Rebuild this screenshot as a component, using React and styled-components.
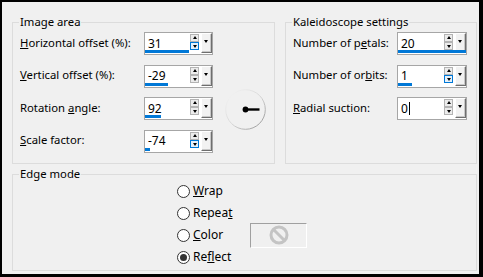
import React from 'react';
import styled, { createGlobalStyle } from 'styled-components';

const Global = createGlobalStyle`
  html, body { margin: 0; padding: 0; background: #f0f0f0; }
  body { font-family: "Noto Sans", "Open Sans", sans-serif; font-size: 11.3px; color: #000; }
  * { box-sizing: border-box; }
`;

const Frame = styled.div`
  width: 483px;
  height: 277px;
  background: #f0f0f0;
  border-style: solid;
  border-color: #000;
  border-width: 2px 4px 3px 2px;
  padding: 20px 2px 0 10px;
  display: grid;
  grid-template-columns: 263px 192px;
  grid-template-rows: 142px 97px;
  column-gap: 10px;
  row-gap: 10px;
`;

const Group = styled.section`
  position: relative;
  border: 1px solid #dcdcdc;
  grid-column: ${p => (p.$span ? '1 / -1' : 'auto')};
  padding: ${p => p.$pad};
`;

const GroupTitle = styled.span`
  position: absolute;
  top: -8px;
  left: 6px;
  padding: 0 1px;
  background: #f0f0f0;
  line-height: 14px;
  white-space: nowrap;
`;

const FieldGrid = styled.div`
  display: grid;
  grid-template-columns: ${p => p.$cols};
  grid-auto-rows: 23px;
  column-gap: 12px;
  row-gap: 9.67px;
  align-items: center;
`;

const Label = styled.span`
  grid-column: 1;
  white-space: nowrap;
  line-height: 14px;
  padding-bottom: 2px;
`;

const Spin = styled.div`
  grid-column: 2;
  position: relative;
  width: ${p => p.$w}px;
  height: 23px;
  border: 1px solid #a6a6a6;
  background: #fff;
  display: flex;
  align-items: flex-start;
`;

const Field = styled.div`
  width: 46px;
  height: 20px;
  padding-left: 3px;
  line-height: 19px;
  font-size: 12px;
  display: flex;
  align-items: center;
`;

const Caret = styled.span`
  display: inline-block;
  width: 1px;
  height: 13px;
  background: #000;
  margin-left: 1px;
`;

const Bar = styled.div`
  position: absolute;
  left: 0;
  bottom: 1px;
  height: 3px;
  background: #0078d7;
`;

const Steppers = styled.div`
  display: flex;
  flex-direction: column;
  margin-top: 1px;
`;

const StepBtn = styled.div`
  position: relative;
  width: 9px;
  height: 8px;
  border: 1px solid ${p => (p.$hot ? '#0078d7' : '#b4b4b4')};
  background: ${p => (p.$hot ? '#e5f1fb' : '#ececec')};
  &::after {
    content: '';
    position: absolute;
    left: 1.5px;
    ${p => (p.$down ? 'top: 2px;' : 'top: 1px;')}
    border-left: 2.5px solid transparent;
    border-right: 2.5px solid transparent;
    ${p => (p.$down ? 'border-top: 3px solid #000;' : 'border-bottom: 3px solid #000;')}
  }
`;

const DropBtn = styled.div`
  position: relative;
  width: 11px;
  height: 20px;
  margin-left: 2px;
  background: #f2f2f2;
  border-top: 1px solid #fff;
  border-left: 1px solid #fff;
  border-right: 1px solid #6e6e6e;
  border-bottom: 1px solid #6e6e6e;
  box-shadow: inset -1px -1px 0 #c8c8c8;
  &::after {
    content: '';
    position: absolute;
    left: 2px;
    top: 6px;
    border-left: 2.5px solid transparent;
    border-right: 2.5px solid transparent;
    border-top: 3px solid #000;
  }
`;

const DialBox = styled.div`
  grid-column: 3;
  grid-row: 2 / span 3;
  align-self: center;
  justify-self: start;
  width: 41px;
  height: 41px;
  margin-top: 1px;
`;

const RadioGrid = styled.div`
  display: grid;
  grid-template-columns: 73px 57px;
  grid-auto-rows: 22px;
  align-items: center;
`;

const RadioItem = styled.label`
  grid-column: 1;
  display: flex;
  align-items: center;
  gap: 3px;
  white-space: nowrap;
  line-height: 14px;
  font-size: 12px;
`;

const RadioCircle = styled.span`
  width: 13px;
  height: 13px;
  border-radius: 50%;
  border: 1px solid #333;
  background: #fff;
  display: flex;
  align-items: center;
  justify-content: center;
  &::after {
    content: '';
    width: 7px;
    height: 7px;
    border-radius: 50%;
    background: ${p => (p.$on ? '#333' : 'transparent')};
  }
`;

const Swatch = styled.div`
  grid-column: 2;
  grid-row: 3;
  width: 57px;
  height: 25px;
  border-top: 1px solid #a0a0a0;
  border-left: 1px solid #a0a0a0;
  border-right: 1px solid #fff;
  border-bottom: 1px solid #fff;
  display: flex;
  align-items: center;
  justify-content: center;
`;

function Spinner({ value, bar, hot, caret, w = 69 }) {
  return (
    <Spin $w={w}>
      <Field>
        {value}
        {caret && <Caret />}
      </Field>
      <Steppers>
        <StepBtn />
        <StepBtn $down $hot={hot} />
      </Steppers>
      <DropBtn />
      {bar > 0 && <Bar style={{ width: bar }} />}
    </Spin>
  );
}

function Dial() {
  return (
    <DialBox>
      <svg width="41" height="41" viewBox="0 0 41 41">
        <defs>
          <linearGradient id="dg" x1="0" y1="0" x2="1" y2="1">
            <stop offset="0" stopColor="#f8f8f8" />
            <stop offset="0.5" stopColor="#d8d8d8" />
            <stop offset="1" stopColor="#8c8c8c" />
          </linearGradient>
        </defs>
        <circle cx="20.5" cy="20.5" r="19.8" fill="none" stroke="url(#dg)" strokeWidth="1" />
        <line x1="20.5" y1="20.5" x2="34.5" y2="20.5" stroke="#000" strokeWidth="2.4" />
        <circle cx="20.5" cy="20.5" r="2.9" fill="#000" />
      </svg>
    </DialBox>
  );
}

function NoSymbol() {
  return (
    <svg width="22" height="22" viewBox="0 0 22 22">
      <circle cx="11" cy="11" r="8" fill="none" stroke="#c4c4c4" strokeWidth="3" />
      <line x1="5.5" y1="5.5" x2="16.5" y2="16.5" stroke="#c4c4c4" strokeWidth="3" />
    </svg>
  );
}

export default function App() {
  return (
    <>
      <Global />
      <Frame>
        <Group $pad="9px 0 0 7px">
          <GroupTitle>Image area</GroupTitle>
          <FieldGrid $cols="112px 69px 41px">
            <Label><u>H</u>orizontal offset (%):</Label>
            <Spinner value="31" bar={44} hot />
            <Label><u>V</u>ertical offset (%):</Label>
            <Spinner value="-29" bar={23} />
            <Label>Rotation <u>a</u>ngle:</Label>
            <Spinner value="92" bar={16} />
            <Label><u>S</u>cale factor:</Label>
            <Spinner value="-74" bar={5} hot />
            <Dial />
          </FieldGrid>
        </Group>
        <Group $pad="9px 0 0 7px">
          <GroupTitle>Kaleidoscope settings</GroupTitle>
          <FieldGrid $cols="92px 70px">
            <Label>Number of p<u>e</u>tals:</Label>
            <Spinner value="20" bar={68} w={70} />
            <Label>Number of or<u>b</u>its:</Label>
            <Spinner value="1" bar={14} w={70} hot />
            <Label><u>R</u>adial suction:</Label>
            <Spinner value="0" bar={0} w={70} caret />
          </FieldGrid>
        </Group>
        <Group $span $pad="5px 0 0 164px">
          <GroupTitle>Edge mode</GroupTitle>
          <RadioGrid>
            <RadioItem><RadioCircle /><span><u>W</u>rap</span></RadioItem>
            <RadioItem><RadioCircle /><span>Repea<u>t</u></span></RadioItem>
            <RadioItem><RadioCircle /><span><u>C</u>olor</span></RadioItem>
            <Swatch><NoSymbol /></Swatch>
            <RadioItem><RadioCircle $on /><span>Re<u>f</u>lect</span></RadioItem>
          </RadioGrid>
        </Group>
      </Frame>
    </>
  );
}
